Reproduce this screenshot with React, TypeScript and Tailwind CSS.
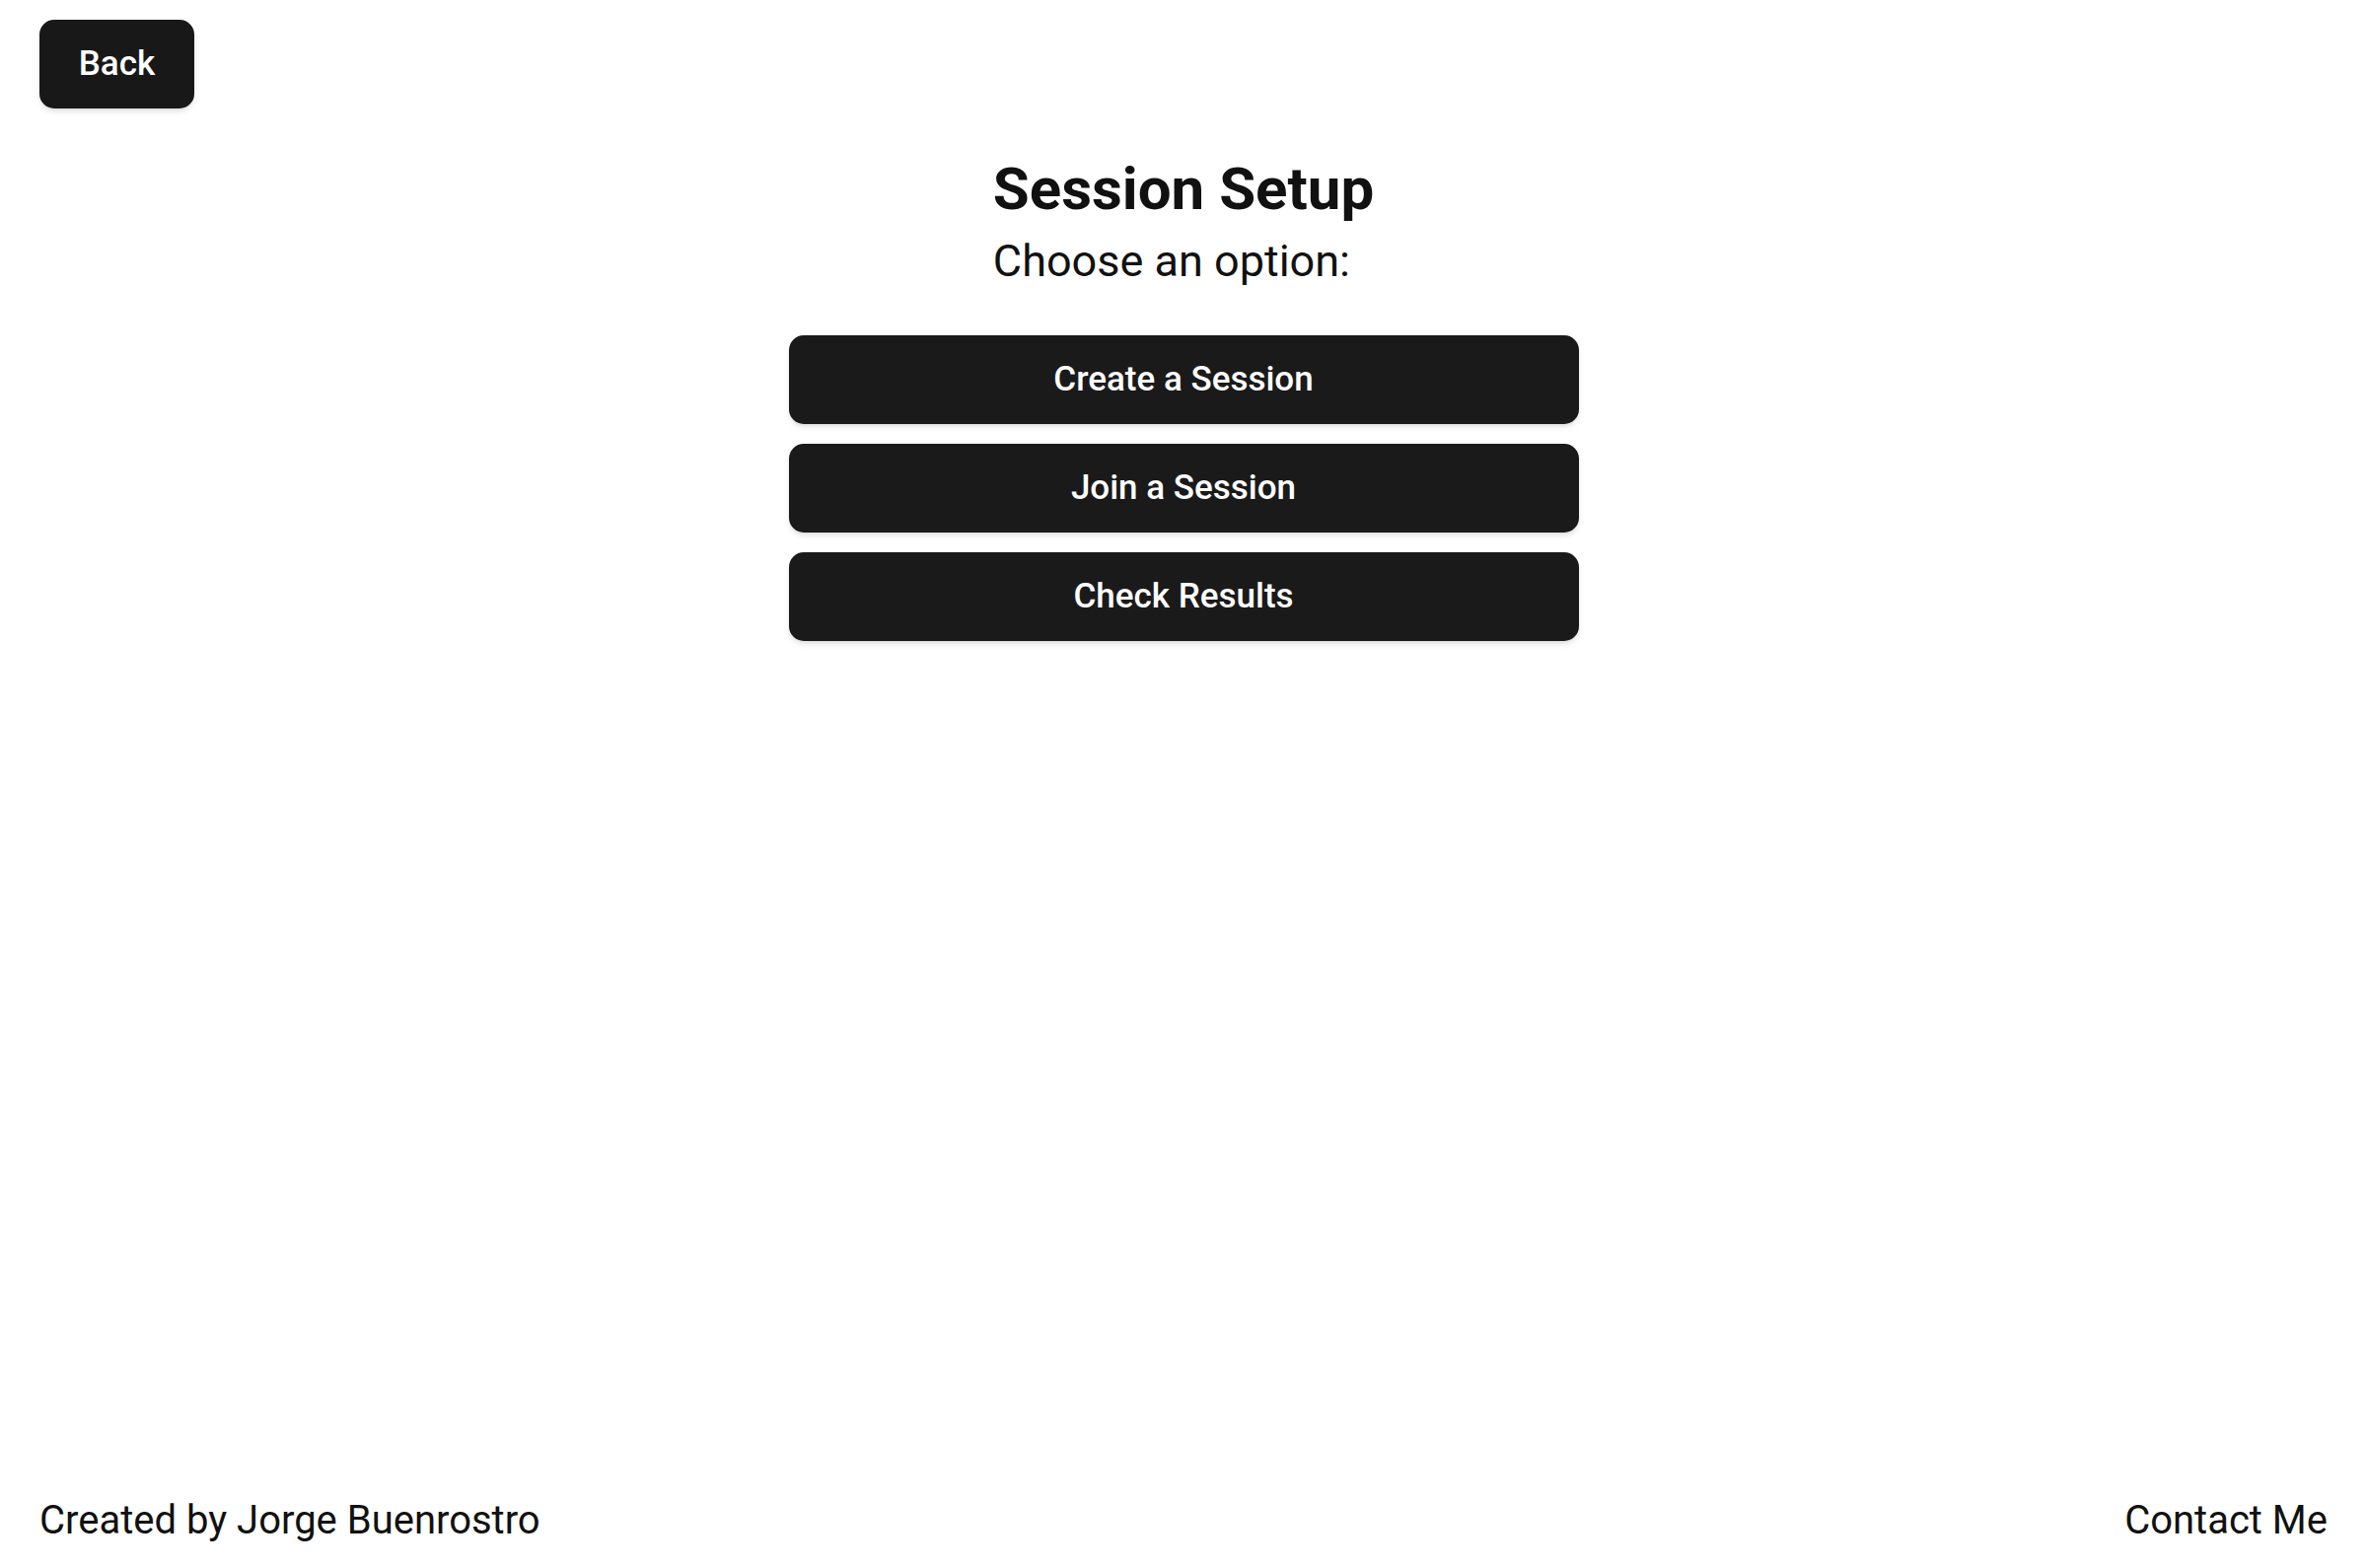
export default function App() {
  const options = ['Create a Session', 'Join a Session', 'Check Results'];

  return (
    <div className="min-h-screen flex flex-col bg-white text-[#111]" style={{ fontFamily: 'Roboto, "Liberation Sans", sans-serif' }}>
      <div className="px-10 pt-5">
        <button className="w-[157px] h-[90px] rounded-[15px] bg-[#181818] text-white text-[35px] font-medium shadow-md">
          Back
        </button>
      </div>

      <main className="flex-1 flex flex-col items-center">
        <div className="flex flex-col items-start mt-[44px]">
          <h1 className="text-[60px] font-bold leading-[75px]">Session Setup</h1>
          <p className="text-[45px] leading-[56px] mt-[8px]">Choose an option:</p>
        </div>

        <div className="mt-[47px] w-[801px] flex flex-col gap-5">
          {options.map((label) => (
            <button
              key={label}
              className="h-[90px] w-full rounded-[15px] bg-[#1a1a1a] text-white text-[35px] font-medium shadow-md"
            >
              {label}
            </button>
          ))}
        </div>
      </main>

      <footer className="flex justify-between items-center px-10 pb-[18px] text-[40px] leading-[60px]">
        <span>Created by Jorge Buenrostro</span>
        <span>Contact Me</span>
      </footer>
    </div>
  );
}
